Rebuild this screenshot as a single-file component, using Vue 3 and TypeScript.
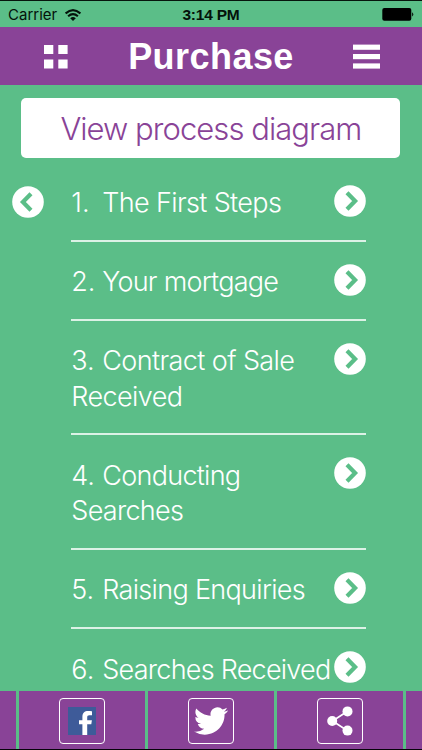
<script setup lang="ts">
interface Step {
  no: number
  lines: string[]
  spacing: number
}

const steps: Step[] = [
  { no: 1, lines: ['The First Steps'], spacing: -0.64 },
  { no: 2, lines: ['Your mortgage'], spacing: -0.75 },
  { no: 3, lines: ['Contract of Sale', 'Received'], spacing: -0.6 },
  { no: 4, lines: ['Conducting', 'Searches'], spacing: -0.72 },
  { no: 5, lines: ['Raising Enquiries'], spacing: -0.68 },
  { no: 6, lines: ['Searches Received'], spacing: -0.76 },
]
</script>

<template>
  <div class="screen">
    <div class="status">
      <div class="carrier">
        <span>Carrier</span>
        <svg width="16" height="12" viewBox="0 0 16 12" fill="none" stroke="#04120a" stroke-width="2.1">
          <path d="M0.6 4.4Q8 -2.2 15.4 4.4" />
          <path d="M3.1 7.2Q8 2.900 12.900 7.2" />
          <path d="M8 12L5.200 9.200Q8 6.900 10.800 9.200Z" fill="#04120a" stroke="none" />
        </svg>
      </div>
      <div class="time">3:14 PM</div>
      <div class="battery">
        <svg width="32" height="13" viewBox="0 0 32 13">
          <rect x="0.3" width="29" height="12.8" rx="2" fill="#000" />
          <path d="M30.200 4.300Q32.400 6.400 30.200 8.500Z" fill="#000" />
        </svg>
      </div>
    </div>

    <header class="header">
      <svg class="grid" width="26" height="26" viewBox="0 0 26 26" fill="#fff">
        <rect x="1" y="1" width="9.300" height="9" />
        <rect x="15.300" y="1" width="9.300" height="9" />
        <rect x="1" y="15.500" width="9.300" height="9" />
        <rect x="15.300" y="15.500" width="9.300" height="9" />
      </svg>
      <h1>Purchase</h1>
      <svg class="menu" width="27" height="26" viewBox="0 0 27 26" fill="#fff">
        <rect y="0.600" width="27" height="5.200" />
        <rect y="10" width="27" height="5.200" />
        <rect y="19.400" width="27" height="5.200" />
      </svg>
    </header>

    <main class="main">
      <button class="diagram"><span>View process diagram</span></button>
      <div class="content">
        <svg class="back" width="32" height="32" viewBox="0 0 32 32">
          <circle cx="16" cy="16" r="15.8" fill="#fff" />
          <path d="M19 7.800L10.900 16l8.100 8.200" fill="none" stroke="#5bbe88" stroke-width="4.200" />
        </svg>
        <ul class="steps">
          <li v-for="s in steps" :key="s.no">
            <span class="no">{{ s.no }}.</span>
            <div class="label" :style="{ letterSpacing: s.spacing + 'px' }">
              <div v-for="line in s.lines" :key="line" class="line">{{ line }}</div>
            </div>
            <svg class="go" width="32" height="32" viewBox="0 0 32 32">
              <circle cx="16" cy="16" r="15.8" fill="#fff" />
              <path d="M13 7.800L21.100 16l-8.100 8.200" fill="none" stroke="#5bbe88" stroke-width="4.200" />
            </svg>
          </li>
        </ul>
      </div>
    </main>

    <footer class="footer">
      <div class="cell edge"></div>
      <div class="cell">
        <span class="box">
          <svg width="28" height="28" viewBox="0 0 28 28">
            <rect width="28" height="28" fill="#3e5b99" />
            <path d="M14.4 28V17.200H11v-4h3.400V9.800C14.400 6 16.500 4 20.200 4c1.400 0 2.900.1 3.800.3v4h-2.600c-1.700 0-2.200.9-2.200 2.200v2.700h4.700l-.6 4h-4.100V28z" fill="#fff" />
          </svg>
        </span>
      </div>
      <div class="cell">
        <span class="box">
          <svg width="34" height="28" viewBox="0 2 24 20" preserveAspectRatio="none" fill="#fff">
            <path d="M23.950 4.570a10 10 0 0 1-2.820.770 4.960 4.960 0 0 0 2.160-2.720c-.950.550-2.010.950-3.130 1.180a4.920 4.920 0 0 0-8.380 4.480C7.690 8.090 4.070 6.130 1.640 3.160a4.820 4.820 0 0 0-.670 2.480c0 1.710.870 3.210 2.190 4.100a4.900 4.900 0 0 1-2.230-.610v.060a4.920 4.920 0 0 0 3.950 4.830 5 5 0 0 1-2.210.080 4.940 4.940 0 0 0 4.600 3.420A9.870 9.870 0 0 1 0 19.540a13.990 13.990 0 0 0 7.560 2.210c9.050 0 14-7.500 14-13.980 0-.210 0-.420-.020-.630a9.940 9.940 0 0 0 2.460-2.550z" />
          </svg>
        </span>
      </div>
      <div class="cell">
        <span class="box">
          <svg width="26" height="30" viewBox="0 0 26 30" fill="#fff">
            <path d="M20.500 5.200L5.500 15l15 9.800" fill="none" stroke="#fff" stroke-width="1.700" />
            <circle cx="20.500" cy="5.400" r="5" />
            <circle cx="5.200" cy="15" r="5" />
            <circle cx="20.500" cy="24.600" r="5" />
          </svg>
        </span>
      </div>
      <div class="cell edge"></div>
    </footer>
  </div>
</template>

<style>
body {
  margin: 0;
  overflow: hidden;
}
</style>

<style scoped>
.screen {
  width: 422px;
  height: 750px;
  box-sizing: border-box;
  border-top: 1px solid #06150d;
  border-bottom: 1px solid #06030a;
  background: #5bbe88;
  display: flex;
  flex-direction: column;
  overflow: hidden;
  font-family: "Liberation Sans", sans-serif;
}
svg {
  display: block;
  flex: none;
}
.status {
  height: 26px;
  flex: none;
  box-sizing: border-box;
  padding-top: 1px;
  display: grid;
  grid-template-columns: 1fr auto 1fr;
  align-items: center;
  color: #04120a;
  line-height: 25px;
}
.carrier {
  display: flex;
  gap: 8px;
  align-items: center;
  padding-left: 8px;
  font-family: Inter, sans-serif;
  font-size: 15px;
}
.time {
  font-size: 15.500px;
  font-weight: 700;
  letter-spacing: -0.200px;
}
.battery {
  display: flex;
  justify-content: flex-end;
  padding-right: 8px;
}
.header {
  height: 58px;
  flex: none;
  box-sizing: border-box;
  background: #894397;
  display: grid;
  grid-template-columns: 26px 1fr 27px;
  align-items: center;
  padding: 2px 42px 0 43px;
  color: #fff;
}
h1 {
  margin: 0;
  text-align: center;
  font-size: 36px;
  letter-spacing: 0.450px;
  line-height: 56px;
  font-weight: 700;
}
.main {
  flex: 1;
  min-height: 0;
  overflow: hidden;
}
.diagram {
  display: block;
  width: 379px;
  height: 60px;
  margin: 13px 0 0 21.400px;
  padding: 0;
  border: 0;
  border-radius: 5px;
  background: #fff;
  color: #894397;
  font-family: Inter, sans-serif;
  font-weight: 300;
  font-size: 31px;
  letter-spacing: -0.950px;
}
.content {
  display: grid;
  grid-template-columns: 59.300px 295px;
  padding-left: 12px;
}
.back {
  margin-top: 28px;
}
.steps {
  list-style: none;
  margin: 4.500px 0 0;
  padding: 0;
}
li {
  display: flex;
  align-items: flex-start;
  box-sizing: border-box;
  padding: 22.600px 0 19px;
  border-bottom: 2px solid #dcf2e6;
  color: #fff;
  font-family: Inter, sans-serif;
  font-weight: 300;
  font-size: 27px;
  line-height: 35.500px;
  white-space: nowrap;
}
.no {
  width: 31px;
  flex: none;
}
.label {
  flex: 1;
  min-width: 0;
}
.line + .line {
  margin-left: -31px;
}
.go {
  margin-top: -0.600px;
}
.footer {
  height: 58px;
  flex: none;
  display: grid;
  grid-template-columns: 16px 126px 126px 126px 1fr;
  gap: 3px;
}
.cell {
  background: #894397;
  display: flex;
  align-items: center;
  justify-content: center;
  padding-top: 1px;
}
.box {
  width: 46px;
  height: 46px;
  box-sizing: border-box;
  border: 1.500px solid #fff;
  border-radius: 4px;
  display: flex;
  align-items: center;
  justify-content: center;
}
</style>
